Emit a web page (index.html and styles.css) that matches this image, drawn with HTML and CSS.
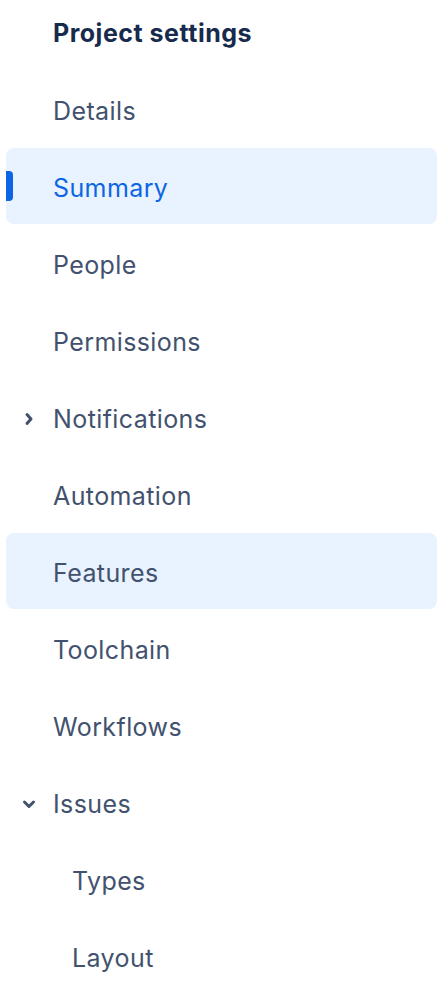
FILE: index.html
```html
<!DOCTYPE html>
<html lang="en">
<head>
  <meta charset="UTF-8" />
  <meta name="viewport" content="width=device-width, initial-scale=1.0">
  <title>Project settings</title>
  <link rel="stylesheet" href="styles.css">
</head>
<body>
  <nav class="sidebar">
    <h1 class="title">Project settings</h1>

    <ul class="menu">
      <li class="item">Details</li>
      <li class="item selected"><span class="marker"></span>Summary</li>
      <li class="item">People</li>
      <li class="item">Permissions</li>
      <li class="item">
        <svg class="chev" width="16" height="16" viewBox="0 0 16 16"><path d="M6 3.5 L10 8 L6 12.5" fill="none" stroke="#42526E" stroke-width="3" stroke-linecap="round" stroke-linejoin="round"/></svg>
        Notifications
      </li>
      <li class="item">Automation</li>
      <li class="item hovered">Features</li>
      <li class="item">Toolchain</li>
      <li class="item">Workflows</li>
      <li class="item">
        <svg class="chev" width="16" height="16" viewBox="0 0 16 16"><path d="M3.5 6 L8 10.5 L12.5 6" fill="none" stroke="#42526E" stroke-width="3" stroke-linecap="round" stroke-linejoin="round"/></svg>
        Issues
      </li>
      <li class="item sub">Types</li>
      <li class="item sub">Layout</li>
    </ul>
  </nav>
</body>
</html>
```

FILE: styles.css
```css
body {
  margin: 0;
  font-family: Inter, "Noto Sans", sans-serif;
  background: #fff;
}

.sidebar {
  padding: 0 6px;
}

.title {
  margin: 0;
  height: 71px;
  padding: 18px 0 0 47px;
  box-sizing: border-box;
  font-size: 25px;
  font-weight: 700;
  letter-spacing: 0.5px;
  color: #172B4D;
  line-height: 30px;
}

.menu {
  list-style: none;
  margin: 0;
  padding: 0;
  display: flex;
  flex-direction: column;
  gap: 1px;
}

.item {
  position: relative;
  height: 76px;
  box-sizing: border-box;
  display: flex;
  align-items: center;
  padding: 4px 0 0 47px;
  font-size: 25px;
  letter-spacing: 0.4px;
  color: #42526E;
  border-radius: 8px;
}

.item.selected {
  background: #E9F2FF;
  color: #0C66E4;
}

.item.hovered {
  background: #E9F2FF;
}

.marker {
  position: absolute;
  left: 0;
  top: 23px;
  width: 7px;
  height: 30px;
  background: #0C66E4;
  border-radius: 0 4px 4px 0;
}

.chev {
  position: absolute;
  left: 15px;
  top: 32px;
}

.item.sub {
  padding-left: 66px;
}
```
